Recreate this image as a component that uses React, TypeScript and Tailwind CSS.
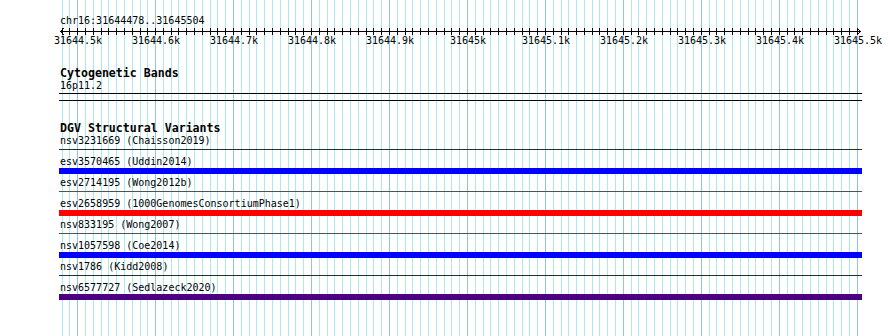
import React from 'react'

const START = 31644478
const END = 31645505
const X0 = 60
const SCALE = 0.7796

const xOf = (bp: number) => X0 + (bp - START) * SCALE

type Feature = { name: string; source: string; kind: 'thin' | 'thick'; color: string }

const FEATURES: Feature[] = [
  { name: 'nsv3231669', source: 'Chaisson2019', kind: 'thin', color: 'bg-[#1c1cb0]' },
  { name: 'esv3570465', source: 'Uddin2014', kind: 'thick', color: 'bg-[#0000ff]' },
  { name: 'esv2714195', source: 'Wong2012b', kind: 'thin', color: 'bg-[#d21c1c]' },
  { name: 'esv2658959', source: '1000GenomesConsortiumPhase1', kind: 'thick', color: 'bg-[#ff0000]' },
  { name: 'nsv833195', source: 'Wong2007', kind: 'thin', color: 'bg-[#d21c1c]' },
  { name: 'nsv1057598', source: 'Coe2014', kind: 'thick', color: 'bg-[#0000ff]' },
  { name: 'nsv1786', source: 'Kidd2008', kind: 'thin', color: 'bg-[#1c1cb0]' },
  { name: 'nsv6577727', source: 'Sedlazeck2020', kind: 'thick', color: 'bg-[#4b0082]' },
]

function ticks() {
  const out: number[] = []
  for (let bp = Math.ceil(START / 10) * 10; bp < END; bp += 10) out.push(bp)
  return out
}

function Grid() {
  return (
    <svg className="absolute inset-0" width={890} height={336}>
      {ticks().map(bp => {
        const x = Math.round(xOf(bp)) + 0.5
        const major = bp % 100 === 0
        return <line key={bp} x1={x} x2={x} y1={0} y2={336} stroke={major ? '#8cc6ec' : '#ade9f0'} strokeWidth={1} />
      })}
    </svg>
  )
}

function Ruler() {
  const majors = ticks().filter(bp => bp % 100 === 0)
  return (
    <div>
      <svg width={890} height={8} className="block">
        <line x1={60} x2={861} y1={4.5} y2={4.5} stroke="#000" />
        {ticks().map(bp => {
          const x = Math.round(xOf(bp)) + 0.5
          return <line key={bp} x1={x} x2={x} y1={1} y2={8} stroke="#000" />
        })}
        <polyline points="64,1 60.5,4.5 64,8" fill="none" stroke="#000" />
        <polyline points="857,1 860.5,4.5 857,8" fill="none" stroke="#000" />
      </svg>
      <div className="relative h-[12px] text-[10px] leading-[12px]">
        {majors.map(bp => (
          <span
            key={bp}
            className="absolute top-0 -translate-x-1/2 whitespace-nowrap"
            style={{ left: Math.round(xOf(bp)) + 1 }}
          >
            {(bp / 1000).toString()}k
          </span>
        ))}
      </div>
    </div>
  )
}

function FeatureRow({ f }: { f: Feature }) {
  return (
    <div className="h-[21px]">
      <div className="pl-[1px] text-[10px] leading-[12px] whitespace-nowrap">
        {f.name} ({f.source})
      </div>
      {f.kind === 'thin' ? (
        <div className={`mt-[2px] h-px w-[803px] ${f.color}`} />
      ) : (
        <div className={`h-[6px] w-[803px] ${f.color}`} />
      )}
    </div>
  )
}

export default function App() {
  return (
    <div className="relative w-[890px] h-[336px] bg-white overflow-hidden text-black font-['DejaVu_Sans_Mono',monospace]">
      <Grid />
      <div className="relative pt-[15px]">
        <div className="pl-[60px] text-[10px] leading-[12px]">chr16:31644478..31645504</div>
        <Ruler />

        <section className="mt-[20px] pl-[59px]">
          <h2 className="pl-[1px] text-[11.6px] leading-[13px] font-bold">Cytogenetic Bands</h2>
          <div className="pl-[1px] text-[10px] leading-[12px]">16p11.2</div>
          <div className="mt-[1px] h-[8px] w-[803px] border-y border-black" />
        </section>

        <section className="mt-[20px] pl-[59px]">
          <h2 className="pl-[1px] text-[11.6px] leading-[14px] font-bold">DGV Structural Variants</h2>
          {FEATURES.map(f => (
            <FeatureRow key={f.name} f={f} />
          ))}
        </section>
      </div>
    </div>
  )
}
